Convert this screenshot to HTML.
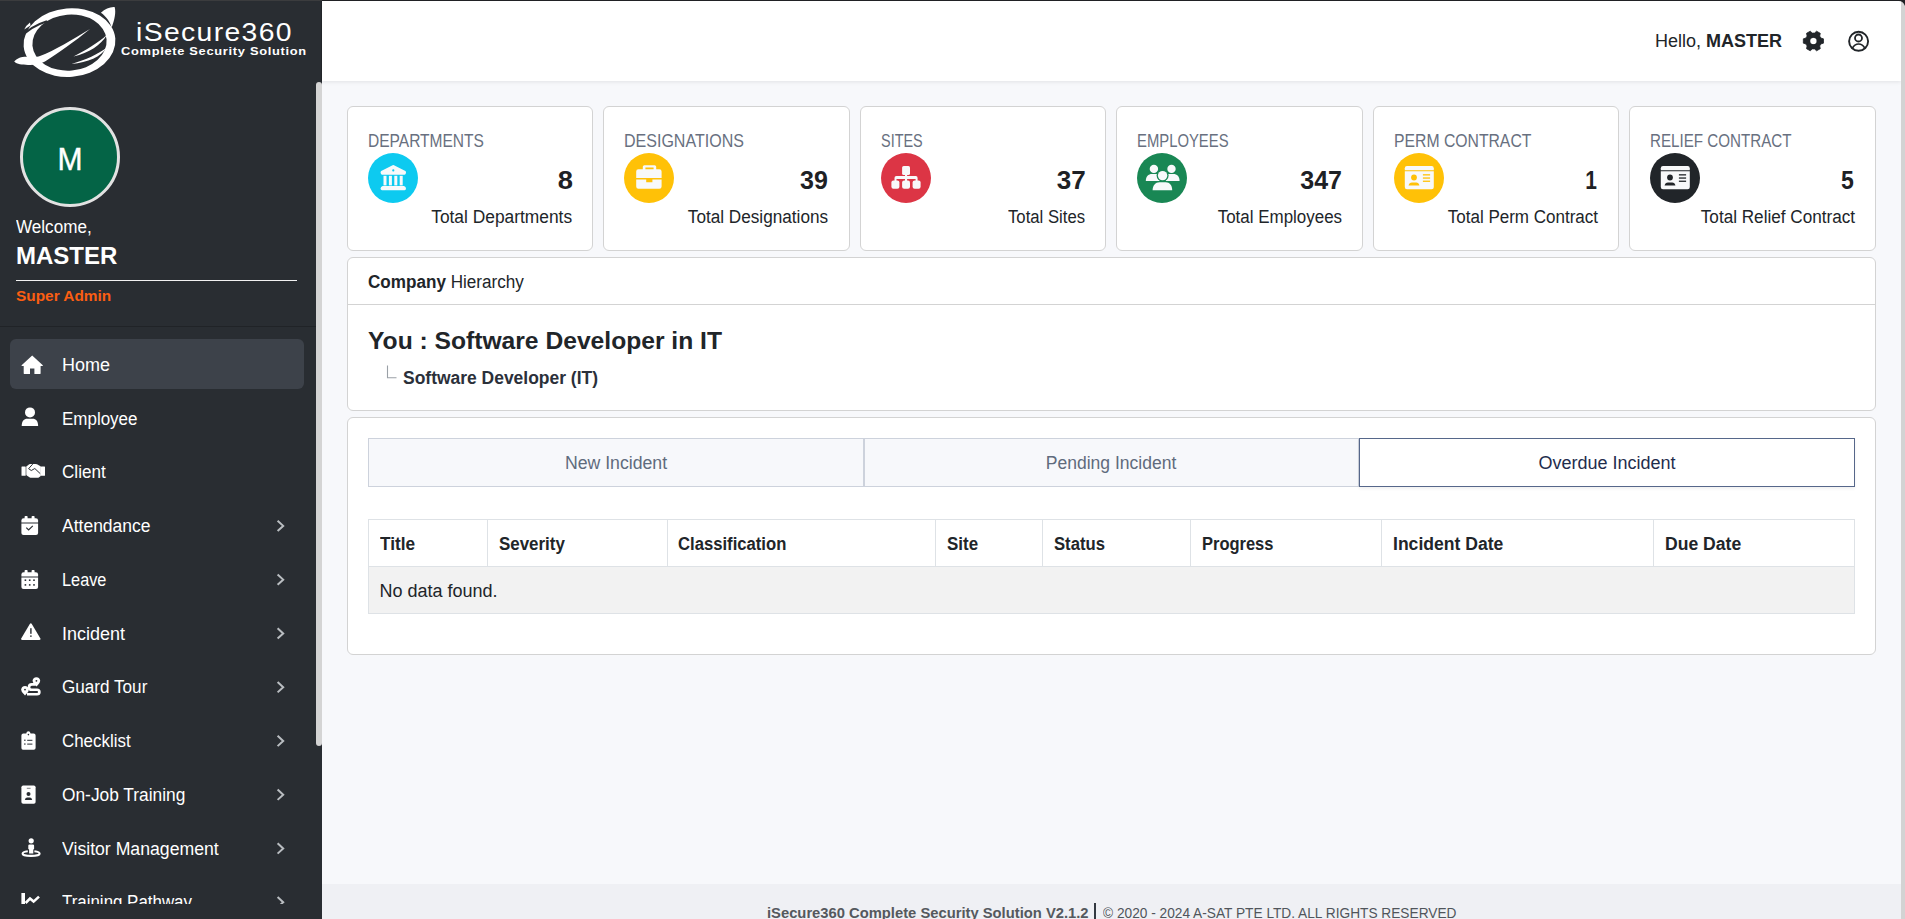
<!DOCTYPE html>
<html><head><meta charset="utf-8"><style>
*{box-sizing:border-box;margin:0;padding:0}
html,body{width:1905px;height:919px;overflow:hidden;font-family:"Liberation Sans",sans-serif;background:#f7f8fb;color:#212529;position:relative}
.tx{position:absolute;line-height:1;white-space:nowrap}
.bx{position:absolute}
svg{position:absolute;overflow:visible}
</style></head><body>
<div class="bx" style="left:322px;top:0;width:1579px;height:81px;background:#fff;box-shadow:0 1px 4px rgba(0,0,0,.09)"></div>
<div class="bx" style="left:322px;top:884px;width:1579px;height:35px;background:#eff0f4"></div>
<div class="bx" style="left:0;top:0;width:322px;height:919px;background:#292d32"></div>
<div class="bx" style="left:316px;top:82px;width:6px;height:664px;border-radius:3px;background:#d4d4d4"></div>
<div class="bx" style="left:0;top:326px;width:316px;height:1px;background:#202327"></div>
<svg style="left:0;top:0" width="120" height="82" viewBox="0 0 120 82">
<g fill="#fff">
<path fill-rule="evenodd" transform="rotate(-5 69.5 42.6)" d="M23.5,42.6 A46,34.3 0 1 0 115.5,42.6 A46,34.3 0 1 0 23.5,42.6 Z M32.3,42.6 A37.2,28 0 1 0 106.7,42.6 A37.2,28 0 1 0 32.3,42.6 Z"/>
<path d="M14.2,61.5 C18,57.5 22,56.5 28,56.8 C33,57 36,57.6 40,56 C55,50 72,40 90,28.9 C74,42 58,53 45,61.5 C40,64 34,65.4 28,65 C22,64.6 17,64.4 14.2,61.5 Z"/>
<path d="M73.5,56.6 C86,50 98,43 106.8,35 C101,45 89,53 73.5,56.6 Z"/>
<path d="M71.5,63.9 C86,60 98,54 106.8,47.5 C101,57 88,62.5 71.5,63.9 Z"/>
<path d="M100.9,12.7 C105,9 110,6.8 114.6,7.1 C116.2,12 114.6,20 111.7,27.4 C110,22 106,16 100.9,12.7 Z"/>
</g>
<path d="M20,38 Q30,26.5 47,21.2" fill="none" stroke="#292d32" stroke-width="2.2"/><path fill="#fff" d="M24.2,29.6 Q26,25.5 30,22.6 L30.5,25.6 Z"/>
</svg>
<div class="tx" style="left:136px;top:20.24px;font-size:25px;font-weight:normal;color:#fff;transform:scaleX(1.1329);transform-origin:left center;letter-spacing:1.2px;font-weight:normal">iSecure360</div>
<div class="tx" style="left:121px;top:45.89px;font-size:11px;font-weight:bold;color:#fff;transform:scaleX(1.1671);transform-origin:left center;letter-spacing:0.6px">Complete Security Solution</div>
<div class="bx" style="left:20px;top:107px;width:100px;height:100px;border-radius:50%;background:#046446;border:3px solid #e2e2e2"></div>
<div class="tx" style="left:-430.5px;width:1000px;text-align:center;top:143.76px;font-size:31px;font-weight:normal;color:#fff;transform:scaleX(0.9700);transform-origin:center center;-webkit-text-stroke:0.4px #fff">M</div>
<div class="tx" style="left:16px;top:218.46px;font-size:18px;font-weight:normal;color:#fff;transform:scaleX(0.9494);transform-origin:left center;">Welcome,</div>
<div class="tx" style="left:16px;top:244.08px;font-size:24px;font-weight:bold;color:#fff;">MASTER</div>
<div class="bx" style="left:16px;top:280px;width:281px;height:1.2px;background:#f2f2f2"></div>
<div class="tx" style="left:16px;top:287.80px;font-size:15px;font-weight:bold;color:#fb5e12;transform:scaleX(1.0264);transform-origin:left center;">Super Admin</div>
<div class="bx" style="left:0;top:327px;width:316px;height:577px;overflow:hidden">
<div class="bx" style="left:10px;top:12px;width:294px;height:50px;border-radius:6px;background:#3d424a"></div>
<div class="tx" style="left:62px;top:28.76px;font-size:18px;color:#fff;transform:scaleX(1.0000);transform-origin:left center">Home</div>
<svg style="left:21px;top:27.60px" width="23" height="20" viewBox="0 0 23 20"><path fill="#fff" d="M0.6,10.2 L11.2,0.6 L21.8,10.2 Q22.2,10.8 21.4,11 L19.6,11 L19.6,18.2 Q19.6,19.1 18.7,19.1 L13.4,19.1 L13.4,13.6 L9,13.6 L9,19.1 L3.6,19.1 Q2.7,19.1 2.7,18.2 L2.7,11 L1,11 Q0.2,10.8 0.6,10.2 Z"/></svg>
<div class="tx" style="left:62px;top:82.52px;font-size:18px;color:#fff;transform:scaleX(0.9430);transform-origin:left center">Employee</div>
<svg style="left:21px;top:79.00px" width="18" height="21" viewBox="0 0 18 21"><circle fill="#fff" cx="9" cy="6.4" r="5"/><path fill="#fff" d="M0.7,20.1 C0.7,15 3,12.8 6.3,12.8 L11.6,12.8 C15,12.8 17.1,15 17.1,20.1 Z"/></svg>
<div class="tx" style="left:62px;top:136.28px;font-size:18px;color:#fff;transform:scaleX(0.9500);transform-origin:left center">Client</div>
<svg style="left:21px;top:136.00px" width="25" height="16" viewBox="0 0 25 16"><rect fill="#fff" x="0.5" y="3.4" width="4.2" height="9.4" rx="0.5"/><rect fill="#fff" x="19.9" y="3.4" width="4.1" height="9.4" rx="0.5"/><path fill="#fff" d="M5.3,3.6 Q5.6,3.2 6,2.9 L8.2,1.2 Q8.8,0.9 9.6,0.9 L14.4,0.9 Q15.2,0.9 16,1.3 L19.5,3.2 Q19.9,3.5 19.9,4 L19.9,12.2 Q19.9,12.8 19.4,13.3 L17.8,14.5 Q17.2,14.8 16.4,14.8 L10.2,14.8 Q9.4,14.8 8.8,14.4 L5.8,12.4 Q5.3,12 5.3,11.4 Z"/><path fill="none" stroke="#292d32" stroke-width="1" stroke-linejoin="round" d="M11.7,1.1 L7.6,5.7 L10.3,7.5 L13.8,5.5 L19.2,10.6"/></svg>
<div class="tx" style="left:62px;top:190.04px;font-size:18px;color:#fff;transform:scaleX(0.9725);transform-origin:left center">Attendance</div>
<svg style="left:21px;top:188.70px" width="18" height="20" viewBox="0 0 18 20"><rect fill="#fff" x="3.6" y="0" width="3" height="3.2" rx="0.8"/><rect fill="#fff" x="10.6" y="0" width="3" height="3.2" rx="0.8"/><path fill="#fff" d="M0.4,4.6 Q0.4,2.2 2.6,2.2 L14.8,2.2 Q17.1,2.2 17.1,4.6 L17.1,6.4 L0.4,6.4 Z"/><path fill="#fff" d="M0.4,7.4 L17.1,7.4 L17.1,17.1 Q17.1,19.1 15,19.1 L2.5,19.1 Q0.4,19.1 0.4,17.1 Z"/><path fill="none" stroke="#292d32" stroke-width="1.2" d="M5.3,11.7 L7.6,14 L11.8,9.8"/></svg>
<svg style="left:0;top:0" width="300" height="600"><polyline points="277.6,193.68 283.2,198.88 277.6,204.08" fill="none" stroke="#b9bdc1" stroke-width="2"/></svg>
<div class="tx" style="left:62px;top:243.80px;font-size:18px;color:#fff;transform:scaleX(0.9062);transform-origin:left center">Leave</div>
<svg style="left:21px;top:242.60px" width="18" height="20" viewBox="0 0 18 20"><rect fill="#fff" x="3.6" y="0" width="3" height="3.2" rx="0.8"/><rect fill="#fff" x="10.6" y="0" width="3" height="3.2" rx="0.8"/><path fill="#fff" d="M0.4,4.6 Q0.4,2.2 2.6,2.2 L14.8,2.2 Q17.1,2.2 17.1,4.6 L17.1,6.4 L0.4,6.4 Z"/><path fill="#fff" d="M0.4,7.4 L17.1,7.4 L17.1,17.1 Q17.1,19.1 15,19.1 L2.5,19.1 Q0.4,19.1 0.4,17.1 Z"/><g fill="#292d32"><rect x="3.6" y="9.4" width="1.6" height="1.6"/><rect x="7.9" y="9.4" width="1.6" height="1.6"/><rect x="12.2" y="9.4" width="1.6" height="1.6"/><rect x="3.6" y="14.1" width="1.6" height="1.6"/><rect x="7.9" y="14.1" width="1.6" height="1.6"/><rect x="12.2" y="14.1" width="1.6" height="1.6"/></g></svg>
<svg style="left:0;top:0" width="300" height="600"><polyline points="277.6,247.44 283.2,252.64 277.6,257.84" fill="none" stroke="#b9bdc1" stroke-width="2"/></svg>
<div class="tx" style="left:62px;top:297.56px;font-size:18px;color:#fff;transform:scaleX(0.9984);transform-origin:left center">Incident</div>
<svg style="left:21px;top:296.40px" width="20" height="18" viewBox="0 0 20 18"><path fill="#fff" d="M8.8,0.9 Q9.8,-0.4 10.8,0.9 L19.4,15.6 Q20,17 18.4,17 L1.2,17 Q-0.4,17 0.2,15.6 Z"/><rect fill="#292d32" x="9.2" y="5.2" width="1.4" height="5.6"/><rect fill="#292d32" x="9.2" y="12.4" width="1.4" height="1.5"/></svg>
<svg style="left:0;top:0" width="300" height="600"><polyline points="277.6,301.20 283.2,306.40 277.6,311.60" fill="none" stroke="#b9bdc1" stroke-width="2"/></svg>
<div class="tx" style="left:62px;top:351.32px;font-size:18px;color:#fff;transform:scaleX(0.9511);transform-origin:left center">Guard Tour</div>
<svg style="left:21px;top:349.90px" width="20" height="19" viewBox="0 0 20 19"><path fill="#fff" d="M4,9 C6.2,9 7.8,10.6 7.8,12.6 C7.8,14.8 5.6,17 4,18.4 C2.4,17 0.2,14.8 0.2,12.6 C0.2,10.6 1.8,9 4,9 Z"/><circle fill="#292d32" cx="4" cy="12.6" r="0.9"/><path fill="#fff" d="M15.4,0.2 C17.6,0.2 19.2,1.8 19.2,3.8 C19.2,5.8 17,8 15.4,9.4 C13.8,8 11.6,5.8 11.6,3.8 C11.6,1.8 13.2,0.2 15.4,0.2 Z"/><circle fill="#292d32" cx="15.4" cy="3.8" r="0.9"/><path fill="none" stroke="#fff" stroke-width="2.6" d="M14.4,7.4 L10.8,7.4 C8.8,7.4 8,8.6 8,10.2 C8,11.8 8.8,12.8 10.8,12.8 L16,12.8 C17.8,12.8 18.4,13.8 18.4,15 C18.4,16.2 17.6,17.2 16,17.2 L6,17.2"/></svg>
<svg style="left:0;top:0" width="300" height="600"><polyline points="277.6,354.96 283.2,360.16 277.6,365.36" fill="none" stroke="#b9bdc1" stroke-width="2"/></svg>
<div class="tx" style="left:62px;top:405.08px;font-size:18px;color:#fff;transform:scaleX(0.9397);transform-origin:left center">Checklist</div>
<svg style="left:21px;top:403.80px" width="15" height="19" viewBox="0 0 15 19"><path fill="#fff" d="M5.2,2.4 Q5.6,0.3 7.4,0.3 Q9.2,0.3 9.6,2.4 L12.6,2.4 Q14.6,2.4 14.6,4.4 L14.6,17 Q14.6,18.7 12.8,18.7 L2,18.7 Q0.4,18.7 0.4,17 L0.4,4.4 Q0.4,2.4 2.4,2.4 Z"/><circle fill="#292d32" cx="7.4" cy="3.6" r="0.8"/><g fill="#292d32"><rect x="3.2" y="8.6" width="1.3" height="1.3"/><rect x="6.2" y="8.8" width="5.2" height="1"/><rect x="3.2" y="12.4" width="1.3" height="1.3"/><rect x="6.2" y="12.6" width="5.2" height="1"/></g></svg>
<svg style="left:0;top:0" width="300" height="600"><polyline points="277.6,408.72 283.2,413.92 277.6,419.12" fill="none" stroke="#b9bdc1" stroke-width="2"/></svg>
<div class="tx" style="left:62px;top:458.84px;font-size:18px;color:#fff;transform:scaleX(0.9630);transform-origin:left center">On-Job Training</div>
<svg style="left:21px;top:457.80px" width="15" height="19" viewBox="0 0 15 19"><rect fill="#fff" x="0.4" y="0.4" width="14.2" height="18.3" rx="1.8"/><rect fill="#292d32" x="5.8" y="2.8" width="3.8" height="1" opacity="0.6"/><circle fill="#292d32" cx="7.5" cy="8.9" r="2"/><path fill="#292d32" d="M3.8,14.9 Q4.4,12.5 6.2,12.5 L8.8,12.5 Q10.6,12.5 11.2,14.9 Z"/></svg>
<svg style="left:0;top:0" width="300" height="600"><polyline points="277.6,462.48 283.2,467.68 277.6,472.88" fill="none" stroke="#b9bdc1" stroke-width="2"/></svg>
<div class="tx" style="left:62px;top:512.60px;font-size:18px;color:#fff;transform:scaleX(0.9812);transform-origin:left center">Visitor Management</div>
<svg style="left:21px;top:510.70px" width="20" height="19" viewBox="0 0 20 19"><circle fill="#fff" cx="10.2" cy="2.8" r="2.6"/><path fill="#fff" d="M7.3,7.6 Q7.3,6.4 8.5,6.4 L11.9,6.4 Q13.1,6.4 13.1,7.6 L13.1,11 L12.3,11.4 L12.3,15.6 L8.1,15.6 L8.1,11.4 L7.3,11 Z"/><path fill="none" stroke="#fff" stroke-width="2.1" d="M6.8,13.2 C3.4,13.6 1.6,14.6 1.6,15.7 C1.6,17 5.2,17.9 10,17.9 C14.8,17.9 18.6,17 18.6,15.7 C18.6,14.6 16.8,13.6 13.4,13.2"/></svg>
<svg style="left:0;top:0" width="300" height="600"><polyline points="277.6,516.24 283.2,521.44 277.6,526.64" fill="none" stroke="#b9bdc1" stroke-width="2"/></svg>
<div class="tx" style="left:62px;top:566.36px;font-size:18px;color:#fff;transform:scaleX(0.9388);transform-origin:left center">Training Pathway</div>
<svg style="left:21px;top:565.80px" width="19" height="12" viewBox="0 0 19 12"><rect fill="#fff" x="0.4" y="0" width="3.6" height="11"/><path fill="none" stroke="#fff" stroke-width="2.6" d="M4.6,10 L9,5.6 L12.6,8.6 L18,3.6"/></svg>
<svg style="left:0;top:0" width="300" height="600"><polyline points="277.6,570.00 283.2,575.20 277.6,580.40" fill="none" stroke="#b9bdc1" stroke-width="2"/></svg>
</div>
<div class="tx" style="left:1654.9px;top:32.46px;font-size:18px;font-weight:normal;color:#212529;">Hello, <b>MASTER</b></div>
<svg style="left:1802px;top:30px" width="23" height="22" viewBox="0 0 23 22"><path fill="#212529" stroke="#212529" stroke-width="0.8" stroke-linejoin="round" fill-rule="evenodd" d="M18.82,8.00 L21.47,8.86 L21.47,13.14 L18.82,14.00 L17.70,15.93 L18.29,18.65 L14.58,20.80 L12.51,18.92 L10.29,18.92 L8.22,20.80 L4.51,18.65 L5.10,15.93 L3.98,14.00 L1.33,13.14 L1.33,8.86 L3.98,8.00 L5.10,6.07 L4.51,3.35 L8.22,1.20 L10.29,3.08 L12.51,3.08 L14.58,1.20 L18.29,3.35 L17.70,6.07 Z M11.4,7.8 A3.2,3.2 0 1 0 11.4,14.2 A3.2,3.2 0 1 0 11.4,7.8 Z"/><circle cx="11.4" cy="11" r="3.1" fill="#fff"/></svg>
<svg style="left:1847px;top:30px" width="24" height="24" viewBox="0 0 24 24"><circle cx="11.6" cy="11.3" r="9.5" fill="none" stroke="#212529" stroke-width="1.9"/><circle cx="11.5" cy="8" r="3.5" fill="none" stroke="#212529" stroke-width="1.8"/><path d="M5.2,18.6 C6.8,15.4 9,14 11.6,14 C14.2,14 16.4,15.4 18,18.6" fill="none" stroke="#212529" stroke-width="1.7"/></svg>
<div class="bx" style="left:347px;top:106px;width:246px;height:145px;background:#fff;border:1px solid #d3d3d3;border-radius:6px"></div>
<div class="tx" style="left:368px;top:131.56px;font-size:18px;font-weight:normal;color:#687080;transform:scaleX(0.8629);transform-origin:left center;font-weight:normal">DEPARTMENTS</div>
<svg style="left:368px;top:153px" width="50" height="50" viewBox="0 0 50 50"><circle cx="25" cy="25" r="25" fill="#0dcaf0"/><path fill="#f8f9fa" d="M24.6,12.2 Q25.3,11.8 26,12.2 L37.4,18 Q38.2,18.6 38,19.8 Q37.8,21.6 36.4,21.7 L14.2,21.7 Q12.8,21.6 12.6,19.8 Q12.4,18.6 13.2,18 Z"/><circle fill="#0dcaf0" cx="25.3" cy="17.4" r="1.1"/><rect fill="#f8f9fa" x="15.5" y="22.8" width="3" height="9.6"/><rect fill="#f8f9fa" x="20.9" y="22.8" width="3" height="9.6"/><rect fill="#f8f9fa" x="26.3" y="22.8" width="3" height="9.6"/><rect fill="#f8f9fa" x="31.7" y="22.8" width="3" height="9.6"/><path fill="#f8f9fa" d="M14.6,33 L36,33 Q38,33.6 38,35.6 Q38,37.2 36.6,37.2 L14,37.2 Q12.6,37.2 12.6,35.6 Q12.6,33.6 14.6,33 Z"/></svg>
<div class="tx" style="right:1332.4px;top:167.64px;font-size:25px;font-weight:bold;color:#1e2125;transform:scaleX(1.0923);transform-origin:right center;">8</div>
<div class="tx" style="right:1332.8px;top:207.76px;font-size:18px;font-weight:normal;color:#212529;transform:scaleX(0.9644);transform-origin:right center;">Total Departments</div>
<div class="bx" style="left:603px;top:106px;width:247px;height:145px;background:#fff;border:1px solid #d3d3d3;border-radius:6px"></div>
<div class="tx" style="left:624px;top:131.56px;font-size:18px;font-weight:normal;color:#687080;transform:scaleX(0.8902);transform-origin:left center;font-weight:normal">DESIGNATIONS</div>
<svg style="left:624px;top:153px" width="50" height="50" viewBox="0 0 50 50"><circle cx="25" cy="25" r="25" fill="#ffc107"/><path fill="#f8f9fa" fill-rule="evenodd" d="M20.4,12.2 L30.6,12.2 Q32.2,12.2 32.2,13.8 L32.2,16.3 L35.4,16.3 Q37.6,16.3 37.6,18.6 L37.6,25 L12.2,25 L12.2,18.6 Q12.2,16.3 14.4,16.3 L18.8,16.3 L18.8,13.8 Q18.8,12.2 20.4,12.2 Z M21.4,14.6 L21.4,16.3 L29.6,16.3 L29.6,14.6 Z"/><path fill="#f8f9fa" d="M12.2,26.4 L22.2,26.4 L22.2,29.2 L28.4,29.2 L28.4,26.4 L37.6,26.4 L37.6,33.6 Q37.6,35.8 35.4,35.8 L14.4,35.8 Q12.2,35.8 12.2,33.6 Z"/></svg>
<div class="tx" style="right:1077.2px;top:167.64px;font-size:25px;font-weight:bold;color:#1e2125;">39</div>
<div class="tx" style="right:1077.3px;top:207.76px;font-size:18px;font-weight:normal;color:#212529;transform:scaleX(0.9537);transform-origin:right center;">Total Designations</div>
<div class="bx" style="left:860px;top:106px;width:246px;height:145px;background:#fff;border:1px solid #d3d3d3;border-radius:6px"></div>
<div class="tx" style="left:881px;top:131.56px;font-size:18px;font-weight:normal;color:#687080;transform:scaleX(0.8020);transform-origin:left center;font-weight:normal">SITES</div>
<svg style="left:881px;top:153px" width="50" height="50" viewBox="0 0 50 50"><circle cx="25" cy="25" r="25" fill="#dc3545"/><rect fill="#f8f9fa" x="21.1" y="13" width="7.9" height="9.1" rx="1.6"/><rect fill="#f8f9fa" x="24" y="21" width="2.1" height="3"/><path fill="#f8f9fa" d="M15.4,23.1 L34.8,23.1 Q36.6,23.1 36.6,24.9 L36.6,28.4 L34.6,28.4 L34.6,25.9 L26.1,25.9 L26.1,28.4 L24,28.4 L24,25.9 L15.5,25.9 L15.5,28.4 L13.5,28.4 L13.5,24.9 Q13.5,23.1 15.4,23.1 Z"/><rect fill="#f8f9fa" x="10.4" y="27.6" width="8" height="8.2" rx="2"/><rect fill="#f8f9fa" x="21.1" y="27.6" width="7.9" height="8.2" rx="2"/><rect fill="#f8f9fa" x="31.6" y="27.6" width="8" height="8.2" rx="2"/></svg>
<div class="tx" style="right:818.9000000000001px;top:167.64px;font-size:25px;font-weight:bold;color:#1e2125;transform:scaleX(1.0407);transform-origin:right center;">37</div>
<div class="tx" style="right:819.8px;top:207.76px;font-size:18px;font-weight:normal;color:#212529;transform:scaleX(0.9277);transform-origin:right center;">Total Sites</div>
<div class="bx" style="left:1116px;top:106px;width:247px;height:145px;background:#fff;border:1px solid #d3d3d3;border-radius:6px"></div>
<div class="tx" style="left:1137px;top:131.56px;font-size:18px;font-weight:normal;color:#687080;transform:scaleX(0.8245);transform-origin:left center;font-weight:normal">EMPLOYEES</div>
<svg style="left:1137px;top:153px" width="50" height="50" viewBox="0 0 50 50"><circle cx="25" cy="25" r="25" fill="#198754"/><circle fill="#f8f9fa" cx="16.9" cy="15.9" r="4.2"/><circle fill="#f8f9fa" cx="34.5" cy="15.9" r="4.2"/><path fill="#f8f9fa" d="M8.8,28 C8.8,23.6 11.4,21 15,21 L19,21 C20.6,21 21.6,21.6 22.6,22.4 L22.6,28 Z"/><path fill="#f8f9fa" d="M42.6,28 C42.6,23.6 40,21 36.4,21 L32.4,21 C30.8,21 29.8,21.6 28.8,22.4 L28.8,28 Z"/><circle fill="#198754" cx="25.6" cy="22.6" r="6"/><circle fill="#f8f9fa" cx="25.6" cy="22.6" r="4.7"/><path fill="#f8f9fa" d="M15.6,37.2 C15.6,32.4 18.6,29.2 22.4,29.2 L28.8,29.2 C32.6,29.2 35.2,32.4 35.2,37.2 Z"/></svg>
<div class="tx" style="right:563px;top:167.64px;font-size:25px;font-weight:bold;color:#1e2125;">347</div>
<div class="tx" style="right:563.0999999999999px;top:207.76px;font-size:18px;font-weight:normal;color:#212529;transform:scaleX(0.9417);transform-origin:right center;">Total Employees</div>
<div class="bx" style="left:1373px;top:106px;width:246px;height:145px;background:#fff;border:1px solid #d3d3d3;border-radius:6px"></div>
<div class="tx" style="left:1394px;top:131.56px;font-size:18px;font-weight:normal;color:#687080;transform:scaleX(0.8750);transform-origin:left center;font-weight:normal">PERM CONTRACT</div>
<svg style="left:1394px;top:153px" width="50" height="50" viewBox="0 0 50 50"><circle cx="25" cy="25" r="25" fill="#ffc107"/><path fill="#f8f9fa" d="M13,13 L37.6,13 Q39.8,13 39.8,15.2 L39.8,17.2 L10.8,17.2 L10.8,15.2 Q10.8,13 13,13 Z"/><path fill="#f8f9fa" d="M10.8,18.3 L39.8,18.3 L39.8,34 Q39.8,36.2 37.6,36.2 L13,36.2 Q10.8,36.2 10.8,34 Z"/><circle fill="#ffc107" cx="20" cy="24.5" r="2.9"/><path fill="#ffc107" d="M14.6,32.6 Q15.2,29.4 18,29.4 L22.2,29.4 Q24.8,29.4 25.4,32.6 Z"/><rect fill="#ffc107" x="28.9" y="21.2" width="7.2" height="1.3"/><rect fill="#ffc107" x="28.9" y="24.4" width="7.2" height="1.3"/><rect fill="#ffc107" x="28.9" y="27.6" width="7.2" height="1.3"/></svg>
<div class="tx" style="right:308.29999999999995px;top:167.64px;font-size:25px;font-weight:bold;color:#1e2125;transform:scaleX(0.8385);transform-origin:right center;">1</div>
<div class="tx" style="right:306.5px;top:207.76px;font-size:18px;font-weight:normal;color:#212529;transform:scaleX(0.9450);transform-origin:right center;">Total Perm Contract</div>
<div class="bx" style="left:1629px;top:106px;width:247px;height:145px;background:#fff;border:1px solid #d3d3d3;border-radius:6px"></div>
<div class="tx" style="left:1650px;top:131.56px;font-size:18px;font-weight:normal;color:#687080;transform:scaleX(0.8419);transform-origin:left center;font-weight:normal">RELIEF CONTRACT</div>
<svg style="left:1650px;top:153px" width="50" height="50" viewBox="0 0 50 50"><circle cx="25" cy="25" r="25" fill="#212529"/><path fill="#f8f9fa" d="M13,13 L37.6,13 Q39.8,13 39.8,15.2 L39.8,17.2 L10.8,17.2 L10.8,15.2 Q10.8,13 13,13 Z"/><path fill="#f8f9fa" d="M10.8,18.3 L39.8,18.3 L39.8,34 Q39.8,36.2 37.6,36.2 L13,36.2 Q10.8,36.2 10.8,34 Z"/><circle fill="#212529" cx="20" cy="24.5" r="2.9"/><path fill="#212529" d="M14.6,32.6 Q15.2,29.4 18,29.4 L22.2,29.4 Q24.8,29.4 25.4,32.6 Z"/><rect fill="#212529" x="28.9" y="21.2" width="7.2" height="1.3"/><rect fill="#212529" x="28.9" y="24.4" width="7.2" height="1.3"/><rect fill="#212529" x="28.9" y="27.6" width="7.2" height="1.3"/></svg>
<div class="tx" style="right:51.200000000000045px;top:167.64px;font-size:25px;font-weight:bold;color:#1e2125;transform:scaleX(0.9214);transform-origin:right center;">5</div>
<div class="tx" style="right:49.59999999999991px;top:207.76px;font-size:18px;font-weight:normal;color:#212529;transform:scaleX(0.9519);transform-origin:right center;">Total Relief Contract</div>
<div class="bx" style="left:347px;top:257px;width:1529px;height:154px;background:#fff;border:1px solid #d3d3d3;border-radius:6px"></div>
<div class="bx" style="left:348px;top:304px;width:1527px;height:1px;background:#d3d3d3"></div>
<div class="tx" style="left:368px;top:272.96px;font-size:18px;font-weight:normal;color:#212529;transform:scaleX(0.9500);transform-origin:left center;"><b>Company</b> Hierarchy</div>
<div class="tx" style="left:368px;top:329.28px;font-size:24px;font-weight:bold;color:#212529;transform:scaleX(1.0261);transform-origin:left center;">You : Software Developer in IT</div>
<svg style="left:386px;top:365px" width="12" height="15"><path d="M1.5,0.5 L1.5,12.8 L10.5,12.8" fill="none" stroke="#9aa0a6" stroke-width="1.1"/></svg>
<div class="tx" style="left:402.8px;top:368.96px;font-size:18px;font-weight:bold;color:#2b303a;transform:scaleX(0.9700);transform-origin:left center;">Software Developer (IT)</div>
<div class="bx" style="left:347px;top:417px;width:1529px;height:238px;background:#fff;border:1px solid #d3d3d3;border-radius:6px"></div>
<div class="bx" style="left:368px;top:438px;width:496px;height:49px;background:#f7f8fb;border:1px solid #cdd2dc"></div>
<div class="bx" style="left:864px;top:438px;width:495px;height:49px;background:#f7f8fb;border:1px solid #cdd2dc"></div>
<div class="bx" style="left:1359px;top:438px;width:496px;height:49px;background:#fff;border:1.4px solid #56678a;box-shadow:0 2px 3px rgba(0,0,0,.06)"></div>
<div class="tx" style="left:116px;width:1000px;text-align:center;top:453.56px;font-size:18px;font-weight:normal;color:#5f6b7d;transform:scaleX(0.9825);transform-origin:center center;">New Incident</div>
<div class="tx" style="left:611px;width:1000px;text-align:center;top:453.56px;font-size:18px;font-weight:normal;color:#5f6b7d;transform:scaleX(0.9737);transform-origin:center center;">Pending Incident</div>
<div class="tx" style="left:1107px;width:1000px;text-align:center;top:453.56px;font-size:18px;font-weight:normal;color:#1f2d4d;">Overdue Incident</div>
<div class="bx" style="left:368px;top:519px;width:1487px;height:95px;border:1px solid #dee2e6;background:#fff"></div>
<div class="bx" style="left:369px;top:567px;width:1485px;height:46px;background:#f2f2f2"></div>
<div class="bx" style="left:368px;top:566px;width:1487px;height:1px;background:#dee2e6"></div>
<div class="bx" style="left:487px;top:519px;width:1px;height:47px;background:#dee2e6"></div>
<div class="bx" style="left:666.5px;top:519px;width:1px;height:47px;background:#dee2e6"></div>
<div class="bx" style="left:935px;top:519px;width:1px;height:47px;background:#dee2e6"></div>
<div class="bx" style="left:1042px;top:519px;width:1px;height:47px;background:#dee2e6"></div>
<div class="bx" style="left:1190px;top:519px;width:1px;height:47px;background:#dee2e6"></div>
<div class="bx" style="left:1381px;top:519px;width:1px;height:47px;background:#dee2e6"></div>
<div class="bx" style="left:1653px;top:519px;width:1px;height:47px;background:#dee2e6"></div>
<div class="tx" style="left:379.5px;top:534.56px;font-size:18px;font-weight:bold;color:#212529;transform:scaleX(0.9568);transform-origin:left center;">Title</div>
<div class="tx" style="left:498.5px;top:534.56px;font-size:18px;font-weight:bold;color:#212529;transform:scaleX(0.9400);transform-origin:left center;">Severity</div>
<div class="tx" style="left:678.0px;top:534.56px;font-size:18px;font-weight:bold;color:#212529;transform:scaleX(0.9259);transform-origin:left center;">Classification</div>
<div class="tx" style="left:946.5px;top:534.56px;font-size:18px;font-weight:bold;color:#212529;transform:scaleX(0.9406);transform-origin:left center;">Site</div>
<div class="tx" style="left:1053.5px;top:534.56px;font-size:18px;font-weight:bold;color:#212529;transform:scaleX(0.9259);transform-origin:left center;">Status</div>
<div class="tx" style="left:1201.5px;top:534.56px;font-size:18px;font-weight:bold;color:#212529;transform:scaleX(0.9156);transform-origin:left center;">Progress</div>
<div class="tx" style="left:1392.5px;top:534.56px;font-size:18px;font-weight:bold;color:#212529;transform:scaleX(0.9759);transform-origin:left center;">Incident Date</div>
<div class="tx" style="left:1664.5px;top:534.56px;font-size:18px;font-weight:bold;color:#212529;transform:scaleX(0.9766);transform-origin:left center;">Due Date</div>
<div class="tx" style="left:379.5px;top:581.66px;font-size:18px;font-weight:normal;color:#212529;">No data found.</div>
<div class="tx" style="left:767px;top:905.10px;font-size:15px;font-weight:bold;color:#55595e;transform:scaleX(0.9840);transform-origin:left center;">iSecure360 Complete Security Solution V2.1.2</div>
<div class="bx" style="left:1094.2px;top:903px;width:1.9px;height:16px;background:#333941"></div>
<div class="tx" style="left:1102.5px;top:905.10px;font-size:15px;font-weight:normal;color:#50555b;transform:scaleX(0.9132);transform-origin:left center;">© 2020 - 2024 A-SAT PTE LTD. ALL RIGHTS RESERVED</div>
<div class="bx" style="left:0;top:0;width:322px;height:1px;background:#3b3c3e"></div>
<div class="bx" style="left:322px;top:0;width:1583px;height:1px;background:#202124"></div>
<div class="bx" style="left:321px;top:1px;width:1px;height:80px;background:#222529"></div>
<div class="bx" style="left:1901px;top:0;width:4px;height:919px;background:#d3d3d3"></div>
<svg style="left:1893px;top:0" width="12" height="8" viewBox="0 0 12 8"><path d="M0,0 H12 V6 Q10,1 6,1 H0 Z" fill="#202124"/></svg>
</body></html>
